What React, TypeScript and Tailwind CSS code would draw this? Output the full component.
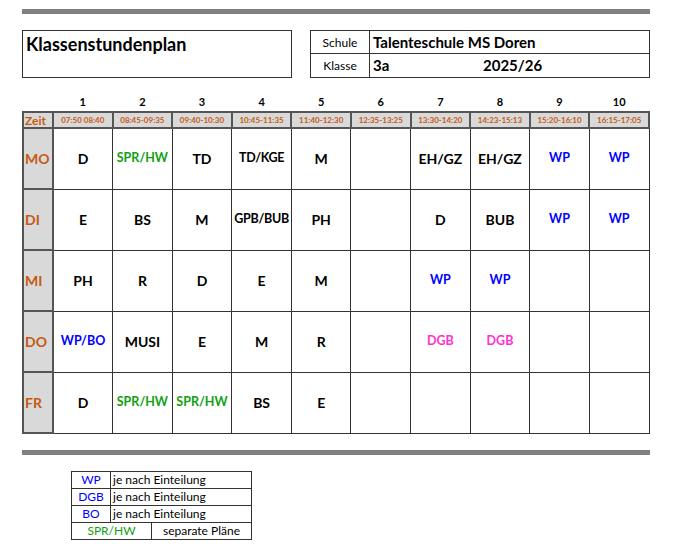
const B = "text-[#0000ff]";
const G = "text-[#12a012]";
const P = "text-[#ff33cc]";
const K = "text-black";

type C = [string, string];
const rows: { d: string; c: C[] }[] = [
  { d: "MO", c: [["D", K], ["SPR/HW", G], ["TD", K], ["TD/KGE", K], ["M", K], ["", K], ["EH/GZ", K], ["EH/GZ", K], ["WP", B], ["WP", B]] },
  { d: "DI", c: [["E", K], ["BS", K], ["M", K], ["GPB/BUB", K], ["PH", K], ["", K], ["D", K], ["BUB", K], ["WP", B], ["WP", B]] },
  { d: "MI", c: [["PH", K], ["R", K], ["D", K], ["E", K], ["M", K], ["", K], ["WP", B], ["WP", B], ["", K], ["", K]] },
  { d: "DO", c: [["WP/BO", B], ["MUSI", K], ["E", K], ["M", K], ["R", K], ["", K], ["DGB", P], ["DGB", P], ["", K], ["", K]] },
  { d: "FR", c: [["D", K], ["SPR/HW", G], ["SPR/HW", G], ["BS", K], ["E", K], ["", K], ["", K], ["", K], ["", K], ["", K]] },
];
const times = ["07:50 08:40", "08:45-09:35", "09:40-10:30", "10:45-11:35", "11:40-12:30", "12:35-13:25", "13:30-14:20", "14:23-15:13", "15:20-16:10", "16:15-17:05"];

export default function App() {
  return (
    <div className="w-[700px] h-[557px] bg-white pl-[22px] pt-[9px] text-black" style={{ fontFamily: "Lato, 'Liberation Sans', sans-serif" }}>
      <div className="w-[628px] h-[5px] bg-[#808080]" />
      <div className="flex justify-between w-[628px] mt-[16px] h-[48px]">
        <div className="w-[270px] border border-[#333] px-[3px] text-[18px] font-bold leading-[26px]">Klassenstundenplan</div>
        <div className="w-[340px] border border-[#333] grid grid-cols-[59px_1fr] grid-rows-2 text-[12px]">
          <div className="border-r border-b border-[#333] flex items-end justify-center pb-[1px]">Schule</div>
          <div className="border-b border-[#333] flex items-end pl-[3px] text-[15px] font-bold">Talenteschule MS Doren</div>
          <div className="border-r border-[#333] flex items-center justify-center">Klasse</div>
          <div className="flex items-center pl-[3px] text-[15px] font-bold"><span className="w-[110px]">3a</span>2025/26</div>
        </div>
      </div>
      <table className="mt-[16px] w-[628px] table-fixed border-collapse">
        <colgroup>
          <col className="w-[30px]" />
          {times.map((_, i) => <col key={i} />)}
        </colgroup>
        <tbody>
          <tr className="h-[18px] text-[11px] font-bold">
            <td />
            {times.map((_, i) => <td key={i} className="text-center">{i + 1}</td>)}
          </tr>
          <tr className="h-[16px] bg-[#d9d9d9] text-[#c65911] font-bold">
            <td className="border-2 border-[#555] text-[12px] pl-[1px] leading-[13px]">Zeit</td>
            {times.map((t) => <td key={t} className="border-2 border-[#555] text-[8px] leading-[12px] text-center whitespace-nowrap">{t}</td>)}
          </tr>
          {rows.map((r) => (
            <tr key={r.d} className="h-[61px]">
              <td className="bg-[#d9d9d9] border-2 border-[#555] text-[#c65911] text-[14px] font-bold pl-[1px]">{r.d}</td>
              {r.c.map(([t, col], i) => (
                <td key={i} className={`border border-[#333] text-center font-bold ${col} ${col === K ? (t.length > 5 ? "text-[12.5px] tracking-[-0.3px]" : "text-[14px]") : "text-[12.5px]"} whitespace-nowrap`}>{t}</td>
              ))}
            </tr>
          ))}
        </tbody>
      </table>
      <div className="w-[628px] h-[5px] bg-[#808080] mt-[16px]" />
      <table className="ml-[49px] mt-[16px] w-[180px] table-fixed border-collapse text-[12px] leading-[16px]">
        <colgroup>
          <col className="w-[39px]" />
          <col className="w-[41px]" />
          <col className="w-[100px]" />
        </colgroup>
        <tbody>
          {[["WP", B], ["DGB", B], ["BO", B]].map(([k, c]) => (
            <tr key={k}>
              <td className={`border border-[#333] text-center ${c}`}>{k}</td>
              <td colSpan={2} className="border border-[#333] pl-[2px]">je nach Einteilung</td>
            </tr>
          ))}
          <tr>
            <td colSpan={2} className={`border border-[#333] text-center ${G}`}>SPR/HW</td>
            <td className="border border-[#333] text-center whitespace-nowrap">separate Pläne</td>
          </tr>
        </tbody>
      </table>
    </div>
  );
}
